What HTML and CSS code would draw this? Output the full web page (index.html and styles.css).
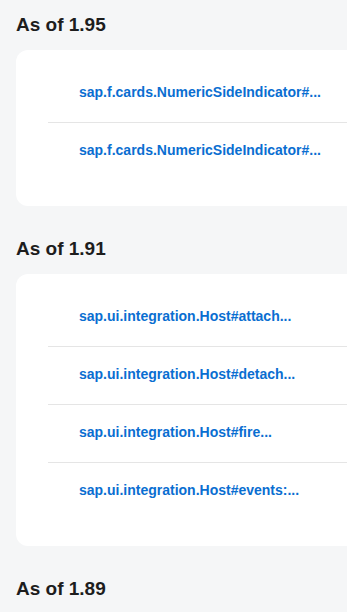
FILE: index.html
```html
<!DOCTYPE html>
<html lang="en">
<head>
    <meta charset="UTF-8">
    <meta name="viewport" content="width=device-width, initial-scale=1.0">
    <title>Changes</title>
    <link rel="stylesheet" href="styles.css">
</head>
<body>

<div class="page">
    <div class="section">
        <h2>As of 1.95</h2>
        <div class="card">
            <ul class="list">
                <li><a href="#">sap.f.cards.NumericSideIndicator#...</a></li>
                <li><a href="#">sap.f.cards.NumericSideIndicator#...</a></li>
            </ul>
        </div>
    </div>

    <div class="section">
        <h2>As of 1.91</h2>
        <div class="card">
            <ul class="list">
                <li><a href="#">sap.ui.integration.Host#attach...</a></li>
                <li><a href="#">sap.ui.integration.Host#detach...</a></li>
                <li><a href="#">sap.ui.integration.Host#fire...</a></li>
                <li><a href="#">sap.ui.integration.Host#events:...</a></li>
            </ul>
        </div>
    </div>

    <div class="section">
        <h2>As of 1.89</h2>
    </div>
</div>

</body>
</html>
```

FILE: styles.css
```css
html, body {
    margin: 0;
    background: #f5f6f7;
    overflow: hidden;
}

body {
    font-family: "Liberation Sans", Arial, sans-serif;
    color: #1d2d3e;
}

.page {
    padding: 13px 0 0 16px;
}

.section {
    margin-bottom: 31px;
}

h2 {
    font-size: 19px;
    line-height: 24px;
    font-weight: bold;
    color: #1d1d1d;
    margin: 0 0 13px 0;
}

.card {
    background: #fff;
    border-radius: 12px;
    margin-right: -24px;
    padding: 15px 0 26px 32px;
}

.list {
    list-style: none;
    margin: 0;
    padding: 0;
}

.list li {
    padding: 18px 0 21px 31px;
    border-bottom: 1px solid #e5e5e5;
    line-height: 18px;
}

.list li:last-child {
    border-bottom: none;
}

.list a {
    font-size: 14px;
    font-weight: bold;
    color: #0a6ed1;
    text-decoration: none;
}
```
